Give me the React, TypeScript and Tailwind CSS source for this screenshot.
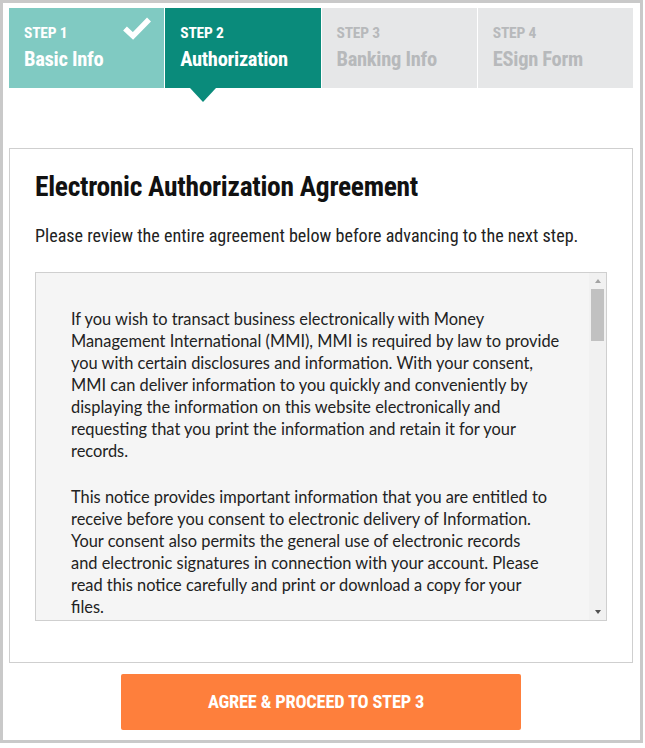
import React from "react";

const p1 = [
  "If you wish to transact business electronically with Money",
  "Management International (MMI), MMI is required by law to provide",
  "you with certain disclosures and information. With your consent,",
  "MMI can deliver information to you quickly and conveniently by",
  "displaying the information on this website electronically and",
  "requesting that you print the information and retain it for your",
  "records.",
];
const p2 = [
  "This notice provides important information that you are entitled to",
  "receive before you consent to electronic delivery of Information.",
  "Your consent also permits the general use of electronic records",
  "and electronic signatures in connection with your account. Please",
  "read this notice carefully and print or download a copy for your",
  "files.",
];

const cond = { fontFamily: "Roboto, 'Liberation Sans', sans-serif" };

function Step({ n, title, state }: { n: number; title: string; state: "done" | "active" | "todo" }) {
  const bg = state === "done" ? "bg-[#80cac2]" : state === "active" ? "bg-[#0a8b7b]" : "bg-[#e6e7e8]";
  const color = state === "todo" ? "text-[#b7b9bb]" : "text-white";
  return (
    <div className={`relative h-[80px] ${bg} ${color} pl-[15px] pt-[16px] font-stretch-condensed`} style={cond}>
      <div className="text-[15.5px] font-bold leading-[18px] tracking-[-0.2px]">STEP {n}</div>
      <div className="mt-[5px] text-[20.5px] font-bold leading-[24px] tracking-[-0.3px]">{title}</div>
      {state === "done" && (
        <svg className="absolute left-[113px] top-[8px]" width="30" height="24" viewBox="0 0 30 24">
          <path d="M3 12.5 L11 20 L27 3.5" fill="none" stroke="white" strokeWidth="5.5" strokeLinecap="butt" strokeLinejoin="miter" />
        </svg>
      )}
      {state === "active" && (
        <div className="absolute left-[25px] top-[80px] h-0 w-0 border-l-[13px] border-r-[13px] border-t-[14px] border-l-transparent border-r-transparent border-t-[#0a8b7b]" />
      )}
    </div>
  );
}

export default function App() {
  return (
    <div className="h-[748px] w-[645px] bg-white">
      <div className="flex h-[743px] w-[643px] flex-col border-[3px] border-[#c9c9c9] pl-[6px] pr-[7px] pt-[5px]">
        <div className="grid grid-cols-4 gap-px bg-white">
          <Step n={1} title="Basic Info" state="done" />
          <Step n={2} title="Authorization" state="active" />
          <Step n={3} title="Banking Info" state="todo" />
          <Step n={4} title="ESign Form" state="todo" />
        </div>
        <div className="mt-[60px] h-[515px] border border-[#cfcfcf] px-[25px] pt-[21px]">
          <h1 className="text-[27.5px] font-bold leading-[34px] text-[#111] font-stretch-condensed tracking-[-0.3px]" style={cond}>
            Electronic Authorization Agreement
          </h1>
          <p className="mt-[21px] text-[18.1px] font-normal leading-[22px] text-[#222] font-stretch-condensed" style={cond}>
            Please review the entire agreement below before advancing to the next step.
          </p>
          <div className="relative mt-[25px] h-[349px] overflow-hidden border border-[#cfcfcf] bg-[#f5f5f5]">
            <div className="pl-[35px] pt-[35px] text-[16.4px] leading-[22px] text-[#222]" style={{ fontFamily: "Lato, 'Noto Sans', sans-serif" }}>
              <div>
                {p1.map((l) => (
                  <div key={l} className="whitespace-nowrap">{l}</div>
                ))}
              </div>
              <div className="mt-[24px]">
                {p2.map((l) => (
                  <div key={l} className="whitespace-nowrap">{l}</div>
                ))}
              </div>
            </div>
            <div className="absolute bottom-0 right-0 top-0 flex w-[17px] flex-col items-center bg-[#f1f1f1]">
              <div className="mt-[6px] h-0 w-0 border-b-[4px] border-l-[3.5px] border-r-[3.5px] border-b-[#a3a3a3] border-l-transparent border-r-transparent" />
              <div className="mt-[6px] h-[52px] w-[13px] bg-[#c1c1c1]" />
              <div className="flex-1" />
              <div className="mb-[6px] h-0 w-0 border-l-[3.5px] border-r-[3.5px] border-t-[4px] border-l-transparent border-r-transparent border-t-[#505050]" />
            </div>
          </div>
        </div>
        <div className="mt-[11px] flex justify-center">
          <button
            className="h-[56px] w-[400px] rounded-[2px] bg-[#fe7f3c] pr-[10px] text-[18.4px] font-bold text-white font-stretch-condensed tracking-[-0.2px]"
            style={cond}
          >
            AGREE &amp; PROCEED TO STEP 3
          </button>
        </div>
      </div>
    </div>
  );
}
